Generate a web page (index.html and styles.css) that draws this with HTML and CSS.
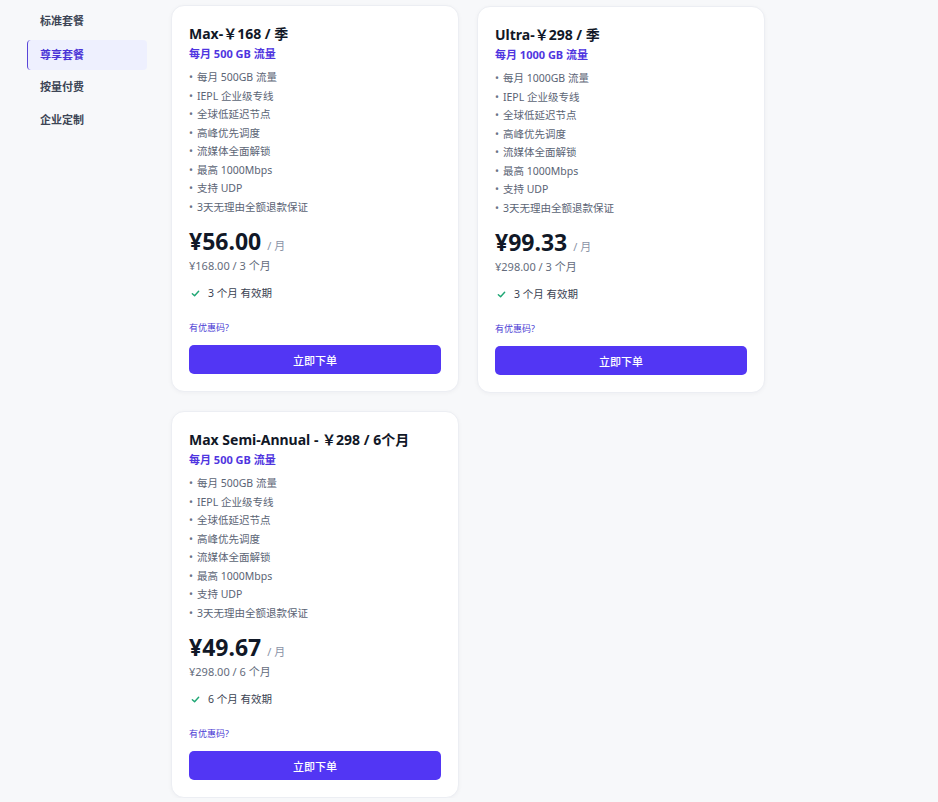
FILE: index.html
```html
<!DOCTYPE html>
<html lang="zh-CN">

<head>
    <meta charset="UTF-8">
    <meta name="viewport" content="width=device-width, initial-scale=1.0">
    <title>套餐购买</title>
    <link rel="stylesheet" href="styles.css">
</head>

<body>
    <div class="page">
        <nav class="side-menu">
            <a class="menu-item" href="#">标准套餐</a>
            <a class="menu-item active" href="#">尊享套餐</a>
            <a class="menu-item" href="#">按量付费</a>
            <a class="menu-item" href="#">企业定制</a>
        </nav>

        <main class="plan-grid">
            <div class="plan-card">
                <h3 class="plan-title">Max-￥168 / 季</h3>
                <div class="plan-traffic">每月 500 GB 流量</div>
                <ul class="plan-features">
                    <li>每月 500GB 流量</li>
                    <li>IEPL 企业级专线</li>
                    <li>全球低延迟节点</li>
                    <li>高峰优先调度</li>
                    <li>流媒体全面解锁</li>
                    <li>最高 1000Mbps</li>
                    <li>支持 UDP</li>
                    <li>3天无理由全额退款保证</li>
                </ul>
                <div class="plan-price">¥56.00 <span class="per">/ 月</span></div>
                <div class="plan-total">¥168.00 / 3 个月</div>
                <div class="plan-valid">
                    <svg class="check" viewBox="0 0 10 10"><path d="M1.5 5.2 L4 7.5 L8.5 2.5" /></svg>
                    3 个月 有效期
                </div>
                <a class="coupon-link" href="#">有优惠码?</a>
                <button class="order-btn">立即下单</button>
            </div>

            <div class="plan-card shift">
                <h3 class="plan-title">Ultra-￥298 / 季</h3>
                <div class="plan-traffic">每月 1000 GB 流量</div>
                <ul class="plan-features">
                    <li>每月 1000GB 流量</li>
                    <li>IEPL 企业级专线</li>
                    <li>全球低延迟节点</li>
                    <li>高峰优先调度</li>
                    <li>流媒体全面解锁</li>
                    <li>最高 1000Mbps</li>
                    <li>支持 UDP</li>
                    <li>3天无理由全额退款保证</li>
                </ul>
                <div class="plan-price">¥99.33 <span class="per">/ 月</span></div>
                <div class="plan-total">¥298.00 / 3 个月</div>
                <div class="plan-valid">
                    <svg class="check" viewBox="0 0 10 10"><path d="M1.5 5.2 L4 7.5 L8.5 2.5" /></svg>
                    3 个月 有效期
                </div>
                <a class="coupon-link" href="#">有优惠码?</a>
                <button class="order-btn">立即下单</button>
            </div>

            <div class="plan-card">
                <h3 class="plan-title">Max Semi-Annual - ￥298 / 6个月</h3>
                <div class="plan-traffic">每月 500 GB 流量</div>
                <ul class="plan-features">
                    <li>每月 500GB 流量</li>
                    <li>IEPL 企业级专线</li>
                    <li>全球低延迟节点</li>
                    <li>高峰优先调度</li>
                    <li>流媒体全面解锁</li>
                    <li>最高 1000Mbps</li>
                    <li>支持 UDP</li>
                    <li>3天无理由全额退款保证</li>
                </ul>
                <div class="plan-price">¥49.67 <span class="per">/ 月</span></div>
                <div class="plan-total">¥298.00 / 6 个月</div>
                <div class="plan-valid">
                    <svg class="check" viewBox="0 0 10 10"><path d="M1.5 5.2 L4 7.5 L8.5 2.5" /></svg>
                    6 个月 有效期
                </div>
                <a class="coupon-link" href="#">有优惠码?</a>
                <button class="order-btn">立即下单</button>
            </div>
        </main>
    </div>
</body>

</html>
```

FILE: styles.css
```css
body {
    margin: 0;
    font-family: "Noto Sans", "Noto Sans CJK SC", sans-serif;
    background-color: #f7f8fa;
    color: #111827;
}

.page {
    display: flex;
    gap: 24px;
    padding-left: 27px;
}

/* left menu */
.side-menu {
    width: 120px;
    padding-top: 5px;
    display: flex;
    flex-direction: column;
    gap: 3px;
}

.menu-item {
    display: block;
    height: 30px;
    line-height: 30px;
    padding-left: 12px;
    font-size: 11px;
    font-weight: 700;
    color: #3d4555;
    text-decoration: none;
    border-left: 1px solid transparent;
    border-radius: 4px;
}

.menu-item:first-child {
    margin-top: 1px;
}

.menu-item.active {
    margin-top: 1px;
    margin-bottom: -1px;
    color: #4a34d6;
    background-color: #eef0fe;
    border-left-color: #5a46d8;
}

/* plan cards */
.plan-grid {
    display: grid;
    grid-template-columns: 288px 288px;
    column-gap: 18px;
    row-gap: 18px;
    padding-top: 5px;
    align-items: start;
}

.plan-card {
    box-sizing: border-box;
    background-color: #fff;
    border: 1px solid #eceef3;
    border-radius: 13px;
    box-shadow: 0 1px 4px rgba(17, 24, 39, 0.04);
    padding: 17px 17px 17px;
    display: flex;
    flex-direction: column;
}

.plan-card.shift {
    margin-top: 1px;
}

.plan-title {
    margin: 0;
    font-size: 14px;
    line-height: 22px;
    font-weight: 700;
    color: #111827;
}

.plan-traffic {
    font-size: 11px;
    line-height: 18px;
    font-weight: 700;
    color: #4f35e0;
}

.plan-features {
    list-style: none;
    margin: 5px 0 0;
    padding: 0;
}

.plan-features li {
    font-size: 10.5px;
    line-height: 18.5px;
    color: #5b6475;
}

.plan-features li::before {
    content: "•";
    margin-right: 4px;
    color: #6b7385;
}

.plan-price {
    margin-top: 13px;
    font-size: 23px;
    line-height: 24px;
    font-weight: 700;
    color: #111827;
}

.plan-price .per {
    font-size: 11px;
    font-weight: 400;
    color: #8a93a6;
}

.plan-total {
    font-size: 11px;
    line-height: 16px;
    color: #646c7c;
}

.plan-valid {
    margin-top: 10px;
    display: flex;
    align-items: center;
    gap: 8px;
    padding-left: 2px;
    font-size: 10.5px;
    line-height: 18px;
    color: #3b4252;
}

.check {
    width: 9px;
    height: 9px;
    fill: none;
    stroke: #1fa774;
    stroke-width: 1.6;
    stroke-linecap: round;
    stroke-linejoin: round;
}

.coupon-link {
    margin-top: 19px;
    font-size: 9px;
    line-height: 14px;
    color: #4a3bd4;
    text-decoration: none;
}

.order-btn {
    margin-top: 10px;
    height: 29px;
    border: none;
    border-radius: 5px;
    background-color: #5236f4;
    color: #fff;
    font-family: inherit;
    font-size: 11px;
    font-weight: 500;
    cursor: pointer;
}

.order-btn:hover {
    background-color: #4428e0;
}
```
